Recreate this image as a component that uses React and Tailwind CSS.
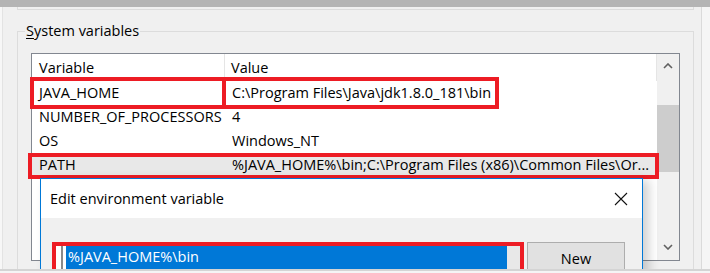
import React from 'react';

const font = { fontFamily: '"Open Sans", "Noto Sans", sans-serif' };

function Chevron({ up }) {
  return (
    <svg width="10" height="6" viewBox="0 0 10 6" className="block">
      <path
        d={up ? 'M1 5 L5 1 L9 5' : 'M1 1 L5 5 L9 1'}
        fill="none"
        stroke="#606060"
        strokeWidth="1.6"
      />
    </svg>
  );
}

function Row({ name, value, selected }) {
  return (
    <div className={`flex h-[24px] items-center ${selected ? 'bg-[#e8e8e8]' : ''}`}>
      <div className="w-[194px] pl-[7px] whitespace-nowrap">{name}</div>
      <div className="flex-1 pl-[6px] overflow-hidden whitespace-nowrap">{value}</div>
    </div>
  );
}

export default function App() {
  // rows further down sit behind the dialog, so only the visible ones are listed
  const rows = [
    ['JAVA_HOME', 'C:\\Program Files\\Java\\jdk1.8.0_181\\bin'],
    ['NUMBER_OF_PROCESSORS', '4'],
    ['OS', 'Windows_NT'],
    ['PATH', '%JAVA_HOME%\\bin;C:\\Program Files (x86)\\Common Files\\Or...', true],
  ];

  return (
    <div
      className="relative w-[710px] h-[273px] overflow-hidden bg-[#f0f0f0] text-[14.5px] text-black leading-[20px]"
      style={font}
    >
      {/* window top edge */}
      <div className="h-[7px] bg-[#b4b4b4]" />

      <div className="flex">
        <div className="w-[3px] bg-[#f7f7f7] border-r border-[#e3e3e3] self-stretch" />
        <div className="w-[698px]">
          {/* bottom of the "User variables" group */}
          <div className="ml-[14px] w-[677px] h-[3px] border-x border-b border-[#dcdcdc]" />

          {/* System variables group */}
          <fieldset className="ml-[14px] mt-[11px] w-[677px] h-[260px] border border-[#dcdcdc]">
            <legend className="ml-[7px] px-[1px] leading-[20px]">
              <span className="underline underline-offset-2">S</span>ystem variables
            </legend>

            <div className="ml-[13px] mt-[12px] w-[649px] h-[208px] border border-[#828790] bg-white flex">
              <div className="flex-1 min-w-0">
                <div className="flex h-[27px] items-center border-r border-[#e5e5e5]">
                  <div className="w-[193px] pl-[7px] h-full flex items-center border-r border-[#e5e5e5]">
                    Variable
                  </div>
                  <div className="pl-[6px]">Value</div>
                </div>
                {rows.map(([n, v, s]) => (
                  <Row key={n} name={n} value={v} selected={s} />
                ))}
              </div>

              {/* scrollbar */}
              <div className="w-[22px] bg-[#f0f0f0] flex flex-col">
                <div className="h-[23px] flex items-center justify-center">
                  <Chevron up />
                </div>
                <div className="mt-[28px] h-[67px] bg-[#cdcdcd]" />
                <div className="flex-1" />
                <div className="h-[26px] flex items-center justify-center">
                  <Chevron />
                </div>
              </div>
            </div>
          </fieldset>
        </div>
        <div className="flex-1 border-l border-[#dadada] bg-[#f5f5f5]" />
      </div>

      {/* annotation boxes */}
      <div className="absolute left-[30px] top-[77px] w-[196px] h-[32px] border-4 border-[#ed1c24]" />
      <div className="absolute left-[222px] top-[77px] w-[277px] h-[32px] border-4 border-[#ed1c24]" />
      <div className="absolute left-[28px] top-[153px] w-[631px] h-[26px] border-4 border-[#ed1c24]" />

      {/* Edit environment variable dialog */}
      <div className="absolute left-[40px] top-[178px] w-[603px] h-[120px] border border-[#0078d7] bg-[#f0f0f0] shadow-[6px_2px_10px_rgba(0,0,0,0.18)]">
        <div className="h-[39px] bg-white flex items-center justify-between pl-[9px] pr-[14px]">
          <span>Edit environment variable</span>
          <svg width="14" height="14" viewBox="0 0 14 14">
            <path d="M1 1 L13 13 M13 1 L1 13" stroke="#111" strokeWidth="1.1" fill="none" />
          </svg>
        </div>
        <div className="flex items-start pl-[11px] pt-[24px] gap-[3px]">
          <div className="w-[472px] h-[40px] border-4 border-[#ed1c24] bg-white flex">
            <div className="w-[5px]" />
            <div className="w-[2px] h-full bg-[#8a8a8a]" />
            <div className="w-[3px]" />
            <div className="w-[441px] h-full bg-[#0078d7] text-white pl-[2px] pt-[1px]">
              %JAVA_HOME%\bin
            </div>
            <div className="flex-1 h-full bg-[#e8e8e8]" />
          </div>
          <div className="w-[98px] h-[40px] bg-[#e1e1e1] border border-[#adadad] flex justify-center pt-[6px]">
            New
          </div>
        </div>
      </div>

      {/* bottom edge of the capture */}
      <div className="absolute left-0 right-0 bottom-0 h-[4px] border-t-2 border-[#d4d4d4] bg-[#f5f5f5]" />
    </div>
  );
}
